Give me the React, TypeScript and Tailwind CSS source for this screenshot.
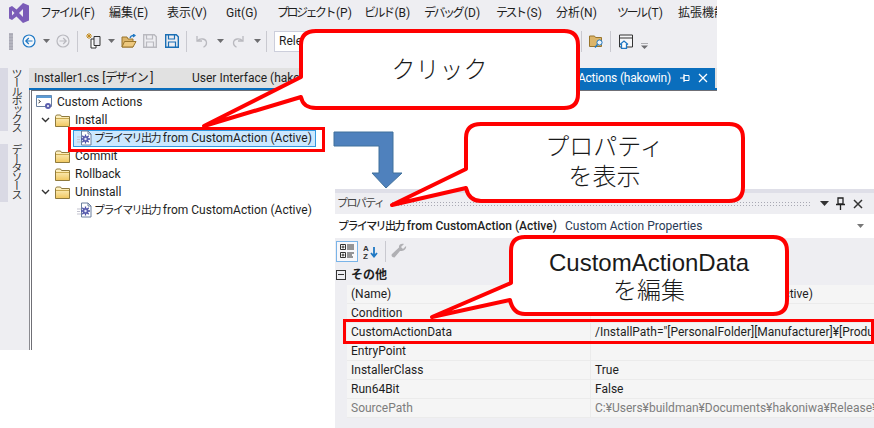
import type { ReactNode } from 'react';

const FONT = '[font-family:Roboto,"Noto_Sans_CJK_JP",sans-serif]';

const MENU = [
  { jp: 'ファイル', key: '(F)', w: 'w-[69px]', kana: true },
  { jp: '編集', key: '(E)', w: 'w-[58px]' },
  { jp: '表示', key: '(V)', w: 'w-[59px]' },
  { jp: 'Git', key: '(G)', w: 'w-[51px]' },
  { jp: 'プロジェクト', key: '(P)', w: 'w-[87px]', kana: true },
  { jp: 'ビルド', key: '(B)', w: 'w-[60px]', kana: true },
  { jp: 'デバッグ', key: '(D)', w: 'w-[72px]', kana: true },
  { jp: 'テスト', key: '(S)', w: 'w-[60px]', kana: true },
  { jp: '分析', key: '(N)', w: 'w-[61px]' },
  { jp: 'ツール', key: '(T)', w: 'w-[61px]', kana: true },
  { jp: '拡張機能', key: '(X)', w: 'w-[80px]' },
];

const PROPS = [
  { name: '(Name)', value: <Primary /> },
  { name: 'Condition', value: '' },
  { name: 'CustomActionData', value: '/InstallPath="[PersonalFolder][Manufacturer]¥[ProductName]¥"' },
  { name: 'EntryPoint', value: '' },
  { name: 'InstallerClass', value: 'True' },
  { name: 'Run64Bit', value: 'False' },
  { name: 'SourcePath', value: 'C:¥Users¥buildman¥Documents¥hakoniwa¥Release¥hakowin.exe', muted: true },
];

// the katakana in the screenshot is much narrower than Noto's
function Kana({ children }: { children: ReactNode }) {
  return <span className="text-[11px] tracking-[-1.6px]">{children}</span>;
}

function Primary() {
  return (
    <>
      <Kana>プライマリ出力</Kana>
      <span className="ml-[3px]">from CustomAction (Active)</span>
    </>
  );
}

function Icon({ w, h, children, className = '' }: { w: number; h: number; children: ReactNode; className?: string }) {
  return (
    <svg width={w} height={h} viewBox={`0 0 ${w} ${h}`} className={`shrink-0 ${className}`}>
      {children}
    </svg>
  );
}

const Caret = ({ className = '' }: { className?: string }) => (
  <Icon w={7} h={4} className={className}>
    <path d="M0 0H7L3.5 4Z" fill="#6d6d70" />
  </Icon>
);

const Sep = ({ className = '' }: { className?: string }) => <div className={`h-[21px] w-px shrink-0 bg-[#c9c9d0] ${className}`} />;

const Folder = () => (
  <Icon w={15} h={13}>
    <defs>
      <linearGradient id="folderFill" x1="0" y1="0" x2="0" y2="1">
        <stop offset="0" stopColor="#fff6cf" />
        <stop offset="1" stopColor="#f0c75e" />
      </linearGradient>
    </defs>
    <path d="M.5 2.500 1.500 1h4l1 1.500h8v10H.5Z" fill="url(#folderFill)" stroke="#8f7a3d" />
    <path d="M1 4.500h13" stroke="#c9a94f" />
  </Icon>
);

const Chevron = () => (
  <Icon w={9} h={6}>
    <path d="M1 1l3.500 3.500L8 1" fill="none" stroke="#333" strokeWidth="1.4" />
  </Icon>
);

const GearDoc = () => (
  <Icon w={16} h={16}>
    <path d="M4.500 1H11l3 3v11H4.500Z" fill="#fff" stroke="#6a7f9e" />
    <path d="M11 1v3h3" fill="none" stroke="#6a7f9e" />
    <path d="M0 7h4M0 9.500h3M0 12h4" stroke="#c3c3cf" />
    <path d="M8.500 4.500v9M4 9h9M5.300 5.800l6.400 6.400M11.700 5.800l-6.400 6.400" stroke="#4b4fa8" strokeWidth="1.3" />
    <circle cx="8.500" cy="9" r="3" fill="#5b5fae" />
    <circle cx="8.500" cy="9" r="1.200" fill="#e6e8fa" />
  </Icon>
);

const SaveIcon = ({ color, className = '' }: { color: string; className?: string }) => (
  <Icon w={14} h={14} className={className}>
    <path d="M.7.7h10.600l2 2v10.600H.7Z" fill="none" stroke={color} strokeWidth="1.4" />
    <path d="M3.500 1v4h6V1M3.500 13V8h7v5" fill="none" stroke={color} strokeWidth="1.200" />
  </Icon>
);

function Toolbar() {
  return (
    <div className="flex h-[30px] shrink-0 items-center pl-[9px]">
      <div className="h-[17px] w-1 shrink-0 bg-[radial-gradient(#a9a9b4_0.8px,transparent_1px)] bg-[length:2px_3px]" />
      <Icon w={14} h={14} className="ml-[9px]">
        <circle cx="7" cy="7" r="6" fill="#f4f7fb" stroke="#1f78c4" strokeWidth="1.2" />
        <path d="M10.500 7H4M6.800 4L3.800 7l3 3" fill="none" stroke="#1f78c4" strokeWidth="1.2" />
      </Icon>
      <Caret className="ml-[7px]" />
      <Icon w={14} h={14} className="ml-[6px]">
        <circle cx="7" cy="7" r="6" fill="none" stroke="#b9b9bf" strokeWidth="1.2" />
        <path d="M3.500 7H10M7.200 4l3 3-3 3" fill="none" stroke="#b9b9bf" strokeWidth="1.2" />
      </Icon>
      <Sep className="ml-[7px]" />
      <Icon w={16} h={16} className="ml-[8px]">
        <path d="M3 0v6M0 3h6M1 1l4 4M5 1L1 5" stroke="#c28a1d" strokeWidth="1" />
        <path d="M5 6h5v9H5Z" fill="#fff" stroke="#333" />
        <path d="M8 3.500h6v9H8Z" fill="#e9e9ee" stroke="#333" />
      </Icon>
      <Caret className="ml-[6px]" />
      <Icon w={16} h={14} className="ml-[6px]">
        <path d="M1 3h5l1 2h5v8H1Z" fill="#dcb56a" stroke="#99752c" />
        <path d="M1 13l2.500-5.500H15L12 13Z" fill="#edc87e" stroke="#99752c" />
        <path d="M9 4c.5-2 2-2.600 4-2.600M12 0l2 1.500L12 3" fill="none" stroke="#1f78c4" strokeWidth="1.2" />
      </Icon>
      <SaveIcon color="#b9b9bf" className="ml-[6px]" />
      <SaveIcon color="#1b6fb5" className="ml-[8px]" />
      <Sep className="ml-[7px]" />
      <Icon w={13} h={13} className="ml-[8px]">
        <path d="M2 1v5h5M2.500 6C5 2.500 11.500 3.500 11.500 8c0 2-1 3.200-3 4.300" fill="none" stroke="#b9b9bf" strokeWidth="1.3" />
      </Icon>
      <Caret className="ml-[9px]" />
      <Icon w={13} h={13} className="ml-[8px]">
        <path d="M11 1v5H6M10.500 6C8 2.500 1.500 3.500 1.500 8c0 2 1 3.200 3 4.300" fill="none" stroke="#b9b9bf" strokeWidth="1.3" />
      </Icon>
      <Caret className="ml-[9px]" />
      <Sep className="ml-[5px]" />
      <div className="ml-[7px] flex h-[21px] w-[200px] shrink-0 items-center border border-[#cccedb] bg-white pl-[4px] text-[12px] text-[#1e1e1e]">Release</div>
      <Sep className="ml-[107px]" />
      <Icon w={15} h={13} className="ml-[7px]">
        <path d="M.5 1h5l1 1.500h6v9H.5Z" fill="#dcb56a" stroke="#99752c" />
        <circle cx="10.500" cy="7.500" r="2.600" fill="#eef4fa" stroke="#1f78c4" />
        <path d="M8.500 9.500L6 12.500" stroke="#1f78c4" strokeWidth="1.4" />
      </Icon>
      <Sep className="ml-[6px]" />
      <Icon w={15} h={15} className="ml-[8px]">
        <path d="M.5 1h13v12H.5Z" fill="#f6f6f8" stroke="#333" />
        <path d="M.5 4h13" stroke="#333" />
        <path d="M1 10.500l4-3.500 4 3.500M2.500 10v4.500h5V10" fill="#fff" stroke="#1f78c4" strokeWidth="1.3" />
      </Icon>
      <Icon w={7} h={6} className="mt-[10px] ml-[7px]">
        <path d="M0 0h7" stroke="#6d6d70" />
        <path d="M0 2.500H7L3.500 6Z" fill="#6d6d70" />
      </Icon>
    </div>
  );
}

function Sidebar() {
  return (
    <div className="flex w-[29px] shrink-0 flex-col text-[11px] tracking-[-2px] text-[#333]">
      <div className="flex h-[63px] border-l-[8px] border-[#d9d9e4] [writing-mode:vertical-rl]">
        <span className="pr-[6px] leading-[15px] whitespace-nowrap">ツールボックス</span>
      </div>
      <div className="mt-[13px] flex h-[58px] border-l-[8px] border-[#d9d9e4] [writing-mode:vertical-rl]">
        <span className="pr-[6px] leading-[15px] whitespace-nowrap">データソース</span>
      </div>
    </div>
  );
}

function TreeRow({ indent, chevron, icon, label }: { indent: string; chevron?: boolean; icon: ReactNode; label: string }) {
  return (
    <div className={`flex h-[18px] items-center ${indent}`}>
      <span className="flex w-[14px] shrink-0 items-center">{chevron && <Chevron />}</span>
      {icon}
      <span className="ml-[5px] whitespace-nowrap">{label}</span>
    </div>
  );
}

function Tree() {
  return (
    <div className="relative min-w-0 flex-1 border-l border-[#8a8a90] bg-white pl-px">
      <div className="h-full border-t border-l border-[#6f6f75] pt-[2px] text-[12px] text-[#1e1e1e]">
        <div className="flex h-[18px] items-center pl-[4px]">
          <Icon w={16} h={15}>
            <path d="M.5.5h15v11H.5Z" fill="#fff" stroke="#6a7f9e" />
            <path d="M.5.5h15v2.500H.5Z" fill="#5b9bd5" />
            <path d="M2.500 5l2 1.500-2 1.500" fill="none" stroke="#333" />
            <circle cx="12" cy="11" r="3" fill="#5b5fae" />
            <circle cx="12" cy="11" r="1" fill="#fff" />
          </Icon>
          <span className="ml-[5px]">Custom Actions</span>
        </div>
        <TreeRow indent="pl-[9px]" chevron icon={<Folder />} label="Install" />
        <div className="flex h-[18px] items-center pl-[41px]">
          <div className="flex h-[17px] w-[243px] items-center border border-[#3399e0] bg-[#cce8ff] pl-[3px]">
            <GearDoc />
            <span className="ml-px whitespace-nowrap">
              <Primary />
            </span>
          </div>
        </div>
        <TreeRow indent="pl-[9px]" icon={<Folder />} label="Commit" />
        <TreeRow indent="pl-[9px]" icon={<Folder />} label="Rollback" />
        <TreeRow indent="pl-[9px]" chevron icon={<Folder />} label="Uninstall" />
        <div className="flex h-[18px] items-center pl-[45px]">
          <GearDoc />
          <span className="ml-px whitespace-nowrap">
            <Primary />
          </span>
        </div>
      </div>
    </div>
  );
}

function PropertiesPanel() {
  return (
    <div className={`absolute top-[189px] left-[335px] flex h-[239px] w-[539px] flex-col bg-[#eeeef2] text-[12px] text-[#1e1e1e] ${FONT}`}>
      <div className="h-1 bg-[#dfdfe8]" />
      <div className="flex h-[21px] items-center pl-[2px] text-[#444]">
        <span className="w-[54px] whitespace-nowrap">
          <Kana>プロパティ</Kana>
        </span>
        <div className="h-[5px] w-[420px] bg-[radial-gradient(#a9a9b4_0.7px,transparent_1px)] bg-[length:3px_3px]" />
        <Icon w={9} h={5} className="ml-[9px]">
          <path d="M0 0h9L4.500 5Z" fill="#333" />
        </Icon>
        <Icon w={9} h={13} className="ml-[7px]">
          <path d="M2 1h5v6H2ZM0 7.500h9M4.500 8v5" fill="none" stroke="#222" strokeWidth="1.3" />
        </Icon>
        <Icon w={10} h={10} className="ml-[8px]">
          <path d="M1 1l8 8M9 1L1 9" stroke="#333" strokeWidth="1.5" />
        </Icon>
      </div>
      <div className="flex h-[24px] items-center bg-white pr-[10px] pl-[3px]">
        <span className="w-[227px] font-medium whitespace-nowrap">
          <Primary />
        </span>
        <span className="text-[#2a3a55]">Custom Action Properties</span>
        <Icon w={7} h={4} className="ml-auto">
          <path d="M0 0h7L3.500 4Z" fill="#777" />
        </Icon>
      </div>
      <div className="flex h-[26px] items-center pl-px">
        <div className="flex h-[21px] w-[22px] items-center justify-center border border-[#7ab4e8] bg-[#f8f8fb]">
          <Icon w={14} h={14}>
            <path d="M.5.5h5v5h-5ZM.5 8.500h5v5h-5Z" fill="#fff" stroke="#333" />
            <path d="M1.500 3h3M3 1.500v3M1.500 11h3M3 9.500v3" stroke="#333" />
            <path d="M7 1h7M7 3h7M7 5h7M7 9h7M7 11h5M7 13h6" stroke="#333" />
          </Icon>
        </div>
        <Icon w={15} h={15} className="ml-[5px]">
          <text x="0" y="6.500" fontSize="8" fontWeight="700" fontFamily="Liberation Sans, sans-serif" fill="#333">A</text>
          <text x="0" y="14.500" fontSize="8" fontWeight="700" fontFamily="Liberation Sans, sans-serif" fill="#333">Z</text>
          <path d="M11 3v9M8 9l3 3.500L14 9" fill="none" stroke="#1f78c4" strokeWidth="1.8" />
        </Icon>
        <Sep className="ml-[7px]" />
        <Icon w={16} h={16} className="ml-[5px]">
          <path d="M15 3l-3 3-2-2 3-3c-2.500-1-5.500.5-5 3.500L1 11c-1 1-.5 3.500 2.500 3.500L9 8c3 .5 7-2 6-5Z" fill="#b0b0b4" />
        </Icon>
      </div>
      <div className="flex h-[21px] items-center pl-px">
        <span className="flex h-[10px] w-[10px] items-center justify-center border border-[#333]">
          <span className="h-px w-[6px] bg-[#333]" />
        </span>
        <span className="ml-[5px] font-semibold">その他</span>
      </div>
      <div className="ml-[12px] flex flex-col bg-[#f5f5f5]">
        {PROPS.map((p) => (
          <div key={p.name} className={`grid h-[19px] grid-cols-[244px_1fr] items-center border-b border-[#ebebeb] ${p.muted ? 'text-[#7d7d7d]' : ''}`}>
            <span className="h-full border-r border-[#ebebeb] pl-[4px] leading-[18px]">{p.name}</span>
            <span className="overflow-hidden pl-[4px] leading-[18px] whitespace-nowrap">{p.value}</span>
          </div>
        ))}
      </div>
    </div>
  );
}

function Annotations() {
  return (
    <svg width="874" height="428" viewBox="0 0 874 428" className="pointer-events-none absolute top-0 left-0">
      <path d="M334 132H393V173H402L386 188L372 173H379V146H334Z" fill="#4f81bd" stroke="#41719c" />
      <g fill="#fff" stroke="#f00" strokeWidth="4" strokeLinejoin="round">
        <path d="M316 31H564Q578 31 578 45V94Q578 108 564 108H316Q303 108 301 97L204 126L301 77V45Q301 31 316 31Z" />
        <path d="M481 124H729Q743 124 743 138V187Q743 201 729 201H481Q469 201 466 188L392 205L466 169V138Q466 124 481 124Z" />
        <path d="M525 237H773Q787 237 787 251V300Q787 314 773 314H525Q513 314 510 300L432 317L511 283V251Q511 237 525 237Z" />
      </g>
      <rect x="69.500" y="128.500" width="254" height="22" fill="none" stroke="#f00" strokeWidth="3" />
      <rect x="344.500" y="320.500" width="528" height="22" fill="none" stroke="#f00" strokeWidth="3" />
    </svg>
  );
}

export default function App() {
  return (
    <div className={`relative h-[428px] w-[874px] overflow-hidden bg-white ${FONT}`}>
      <div className="flex h-[350px] w-[717px] flex-col overflow-hidden bg-[#eeeef2]">
        <div className="flex h-[26px] shrink-0 items-center pl-[9px] text-[12px] text-[#1e1e1e]">
          <Icon w={20} h={20} className="mr-[11px]">
            <path d="M14 0l6 2.500v15L14 20 7.500 13.500 3 17 0 15.500v-11L3 3l4.500 3.500Z" fill="#7b5cb8" />
            <path d="M14 6l-4 4 4 4ZM3 7.500v5L5.500 10Z" fill="#eeeef2" />
          </Icon>
          {MENU.map((m) => (
            <span key={m.jp} className={`${m.w} shrink-0 whitespace-nowrap`}>
              <span className={m.kana ? 'tracking-[-2.5px]' : ''}>{m.jp}</span>
              <span className={m.kana ? 'ml-[2px]' : ''}>{m.key}</span>
            </span>
          ))}
        </div>
        <Toolbar />
        <div className="h-[12px] shrink-0" />
        <div className="flex min-h-0 flex-1">
          <Sidebar />
          <div className="flex min-w-0 flex-1 flex-col">
            <div className="flex h-[22px] shrink-0 items-start border-b-2 border-[#0a6ebd] bg-[#e1e1e1] pl-[5px] text-[12px] text-[#1e1e1e]">
              <span className="flex h-[20px] w-[158px] items-center whitespace-nowrap">
                Installer1.cs [<span className="tracking-[-1.5px]">デザイン</span>&nbsp;]
              </span>
              <span className="flex h-[20px] w-[386px] items-center whitespace-nowrap">User Interface (hakowin)</span>
              <div className="flex h-[20px] w-[137px] items-center justify-end bg-[#0a6ebd] pr-[7px] text-white">
                <span className="tracking-[-0.2px] whitespace-nowrap">Actions (hakowin)</span>
                <Icon w={10} h={9} className="ml-[9px]">
                  <path d="M4 1.500h5v5H4ZM0 4h4M4 0v8" fill="none" stroke="#fff" />
                </Icon>
                <Icon w={10} h={10} className="ml-[8px]">
                  <path d="M1 1l8 8M9 1L1 9" stroke="#fff" strokeWidth="1.3" />
                </Icon>
              </div>
            </div>
            <Tree />
          </div>
        </div>
      </div>
      <PropertiesPanel />
      <Annotations />
      <div className="absolute top-[29px] left-[301px] flex h-[77px] w-[277px] items-center justify-center text-[24px] font-light text-[#1a1a1a] [font-family:'Noto_Sans_CJK_JP',sans-serif]">
        クリック
      </div>
      <div className="absolute top-[122px] left-[466px] flex h-[76px] w-[277px] flex-col items-center justify-center text-[24px] leading-[30px] font-light text-[#1a1a1a] [font-family:'Noto_Sans_CJK_JP',sans-serif]">
        <span>プロパティ</span>
        <span>を表示</span>
      </div>
      <div className="absolute top-[238px] left-[511px] flex h-[77px] w-[276px] flex-col items-center justify-center text-[24px] leading-[28px] font-light text-[#1a1a1a] [font-family:'Liberation_Sans','Noto_Sans_CJK_JP',sans-serif]">
        <span>CustomActionData</span>
        <span>を編集</span>
      </div>
    </div>
  );
}
